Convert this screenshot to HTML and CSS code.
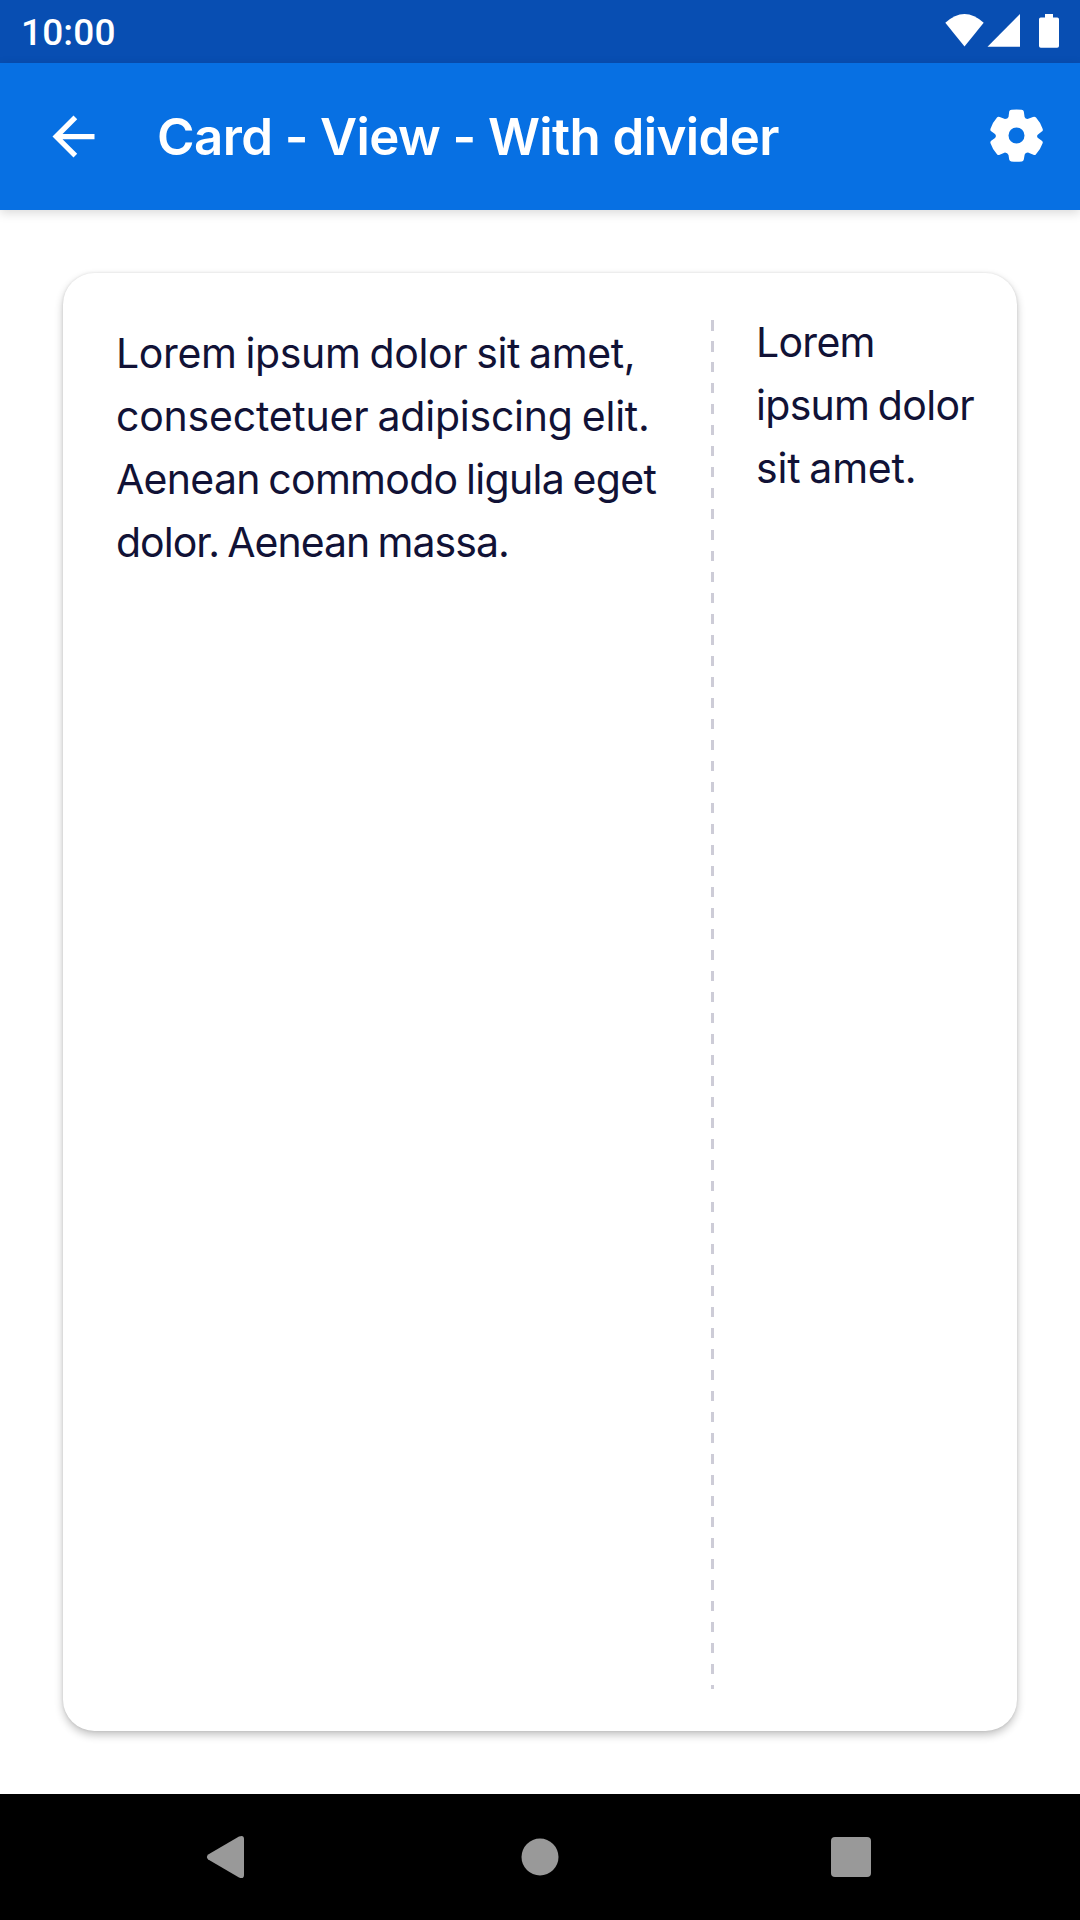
FILE: index.html
```html
<!DOCTYPE html>
<html lang="en">
<head>
<meta charset="utf-8">
<title>Card - View - With divider</title>
<link rel="stylesheet" href="styles.css">
</head>
<body>
<div class="screen">
  <div class="status-bar">
    <span class="clock">10:00</span>
    <svg class="status-icons" width="120" height="63" viewBox="0 0 120 63" fill="#fff">
      <path d="M5.3 22.8Q24.5 5.2 43.7 22.8L24.5 46.5Z"/>
      <path d="M80 14V46.7H47.5Z"/>
      <path d="M105 14h8v3.5h4.200q1.800 0 1.800 1.800V46q0 1.800-1.800 1.800H100.800Q99 47.800 99 46V19.300q0-1.800 1.800-1.800H105Z"/>
    </svg>
  </div>
  <header class="toolbar">
    <svg class="back" width="63" height="63" viewBox="0 0 24 24" fill="#fff"><path d="M20 11H7.830l5.590-5.590L12 4l-8 8 8 8 1.410-1.410L7.830 13H20z"/></svg>
    <h1 class="title">Card - View - With divider</h1>
    <svg class="settings" width="63" height="63" viewBox="0 0 63 63" fill="#fff" fill-rule="evenodd"><path d="M26.500 5.700Q31.500 5.100 36.600 5.700Q38.500 5.900 38.800 7.500L39.600 13Q40.300 15 42.500 15L48 13Q49.800 12.300 51 13.600Q55.500 18.500 57.700 25Q58.200 26.800 56.800 27.600L53 30.500Q51.200 32 53 34L56.800 36.800Q58.200 37.800 57.600 39.300Q55.500 45.500 51 50.200Q50 51.500 48.400 50.800L43 48.500Q40 48.500 39.600 51L38.800 55.600Q38.500 57.200 37 57.500Q31.500 58.200 26.200 57.500Q24.500 57.200 24.200 55.600L23.500 51Q22.500 48.500 20 48.500L14.700 50.800Q13.100 51.500 12 50.200Q7.500 45.500 5.500 39.300Q5 37.800 6.200 36.800L10 34Q11.800 32 10 30L6.200 27.300Q5 26.300 5.500 24.800Q7.500 18.500 12 13.500Q13 12.200 14.700 13L20 15Q22.700 15 23.500 13L24.200 7.500Q24.500 5.900 26.500 5.700ZM31.500 23.500A8 8 0 1 0 31.500 39.500A8 8 0 1 0 31.500 23.500Z"/></svg>
  </header>
  <main class="content">
    <section class="card">
      <p class="text primary"><span class="line snug">Lorem ipsum dolor sit amet,</span><span class="line loose">consectetuer adipiscing elit.</span><span class="line tight">Aenean commodo ligula eget</span><span class="line tighter">dolor. Aenean massa.</span></p>
      <div class="divider"></div>
      <p class="text secondary"><span class="line tight">Lorem</span><span class="line tight">ipsum dolor</span><span class="line loose">sit amet.</span></p>
    </section>
  </main>
  <nav class="nav-bar">
    <svg width="1080" height="126" viewBox="0 0 1080 126" fill="#999">
      <path d="M208.200 60.500L239 42.500Q244 40.500 244 45V81Q244 85.500 239 83.500L208.200 65.500Q205.600 63 208.200 60.500Z"/>
      <circle cx="540" cy="63" r="18.500"/>
      <rect x="831" y="43" width="40" height="40" rx="4"/>
    </svg>
  </nav>
</div>
</body>
</html>
```
FILE: styles.css
```css
* { box-sizing: border-box; margin: 0; padding: 0; }
body { width: 1080px; height: 1920px; overflow: hidden; background: #fff; }
svg { display: block; flex: none; }
.screen { display: flex; flex-direction: column; height: 1920px; }
.status-bar {
  display: flex;
  justify-content: space-between;
  height: 63px;
  padding: 0 20px 0 21px;
  background: #084eb2;
}
.clock { font: 500 37px/66px Roboto, sans-serif; letter-spacing: .15px; color: #fff; }
.toolbar {
  display: flex;
  align-items: center;
  height: 147px;
  padding: 0 32px 0 42px;
  background: #0770e3;
  box-shadow: 0 3px 10px rgba(0, 0, 0, .15);
}
.title {
  flex: 1;
  padding-left: 52px;
  font: 600 51px/60px Inter, sans-serif;
  letter-spacing: -.6px;
  color: #fff;
  white-space: nowrap;
}
.settings { margin-top: -2px; }
.content { flex: 1; display: flex; padding: 63px; }
.card {
  flex: 1;
  display: flex;
  padding: 47px 0 42px;
  border-radius: 31.5px;
  background: #fff;
  box-shadow: 0 4px 9px rgba(0, 0, 0, .24), 0 0 3px rgba(0, 0, 0, .1);
}
.text {
  font: 400 41px/63px Inter, sans-serif;
  word-spacing: -2.3px;
  color: #111236;
  white-space: nowrap;
}
.line { display: block; }
.loose { letter-spacing: -.22px; }
.snug { letter-spacing: -.35px; }
.tight { letter-spacing: -.7px; }
.tighter { letter-spacing: -.98px; }
.primary { width: 648px; padding: 2px 0 0 53px; }
.divider {
  width: 3px;
  background: repeating-linear-gradient(#cdccd7 0 10.500px, transparent 10.500px 21px);
}
.secondary { padding-left: 42px; margin-top: -9px; }
.nav-bar { height: 126px; background: #000; }
```
